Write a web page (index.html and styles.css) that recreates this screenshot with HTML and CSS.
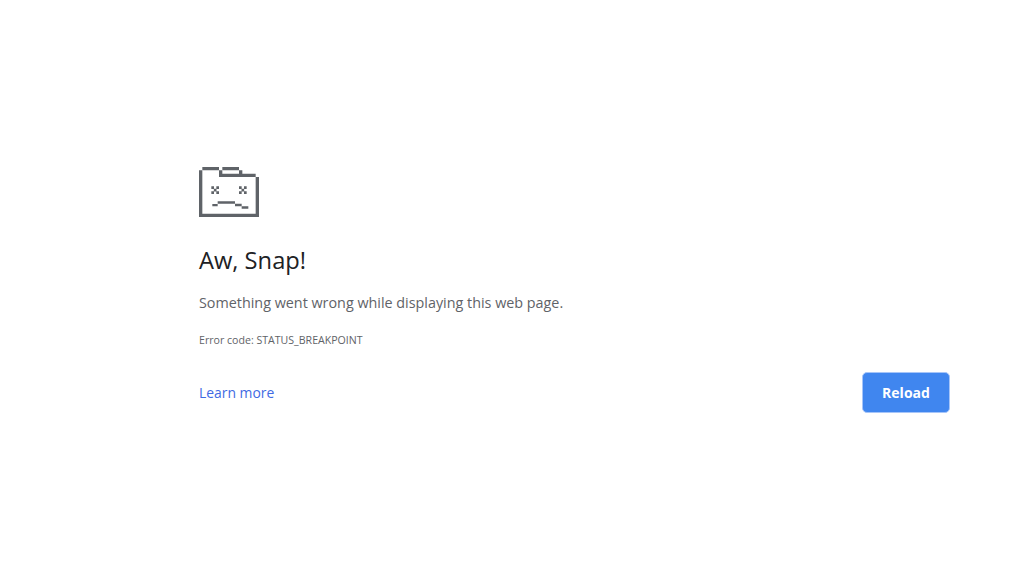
FILE: index.html
```html
<!DOCTYPE html>
<html lang="en">
<head>
    <meta charset="UTF-8">
    <meta name="viewport" content="width=device-width, initial-scale=1.0">
    <title>Aw, Snap!</title>
    <link rel="stylesheet" href="styles.css">
</head>
<body>
    <div class="error-page">
        <svg class="sad-tab" viewBox="0 0 18 15" aria-hidden="true">
            <path d="M0 1h1v13h16V3h-11V1h1v1h5V1h1v1h4v1h1v12H0z"/>
            <path d="M1 0h5v1H1zM7 0h5v1H7z"/>
            <path d="M3.7 5.8h.8v.8h-.8zM5.2 5.8H6v.8h-.8zM4.45 6.55h.8v.8h-.8zM3.7 7.3h.8v.8h-.8zM5.2 7.3H6v.8h-.8z"/>
            <path d="M12 5.8h.8v.8H12zM13.5 5.8h.8v.8h-.8zM12.75 6.55h.8v.8h-.8zM12 7.3h.8v.8H12zM13.5 7.3h.8v.8h-.8z"/>
            <path d="M4 11.1h1.6v.7H4zM5.6 10.3h5.2v.7H5.6zM10.8 11h2v.8h-2zM12.8 11.8h2v.7h-2z"/>
        </svg>
        <h1 class="title">Aw, Snap!</h1>
        <p class="message">Something went wrong while displaying this web page.</p>
        <p class="error-code">Error code: STATUS_BREAKPOINT</p>
        <div class="actions">
            <a class="learn-more" href="#">Learn more</a>
            <button class="reload-btn">Reload</button>
        </div>
    </div>
</body>
</html>
```

FILE: styles.css
```css
body {
    margin: 0;
    background-color: white;
    font-family: "Open Sans", "Noto Sans", Arial, sans-serif;
}
.error-page {
    width: 751px;
    margin-left: 199px;
    padding-top: 167px;
}
.sad-tab {
    display: block;
    width: 60px;
    height: 50px;
    fill: #5f6368;
}
.title {
    margin: 26px 0 0;
    font-size: 23.7px;
    font-weight: 400;
    line-height: 34px;
    color: #202124;
}
.message {
    margin: 16px 0 0;
    font-size: 14.35px;
    line-height: 20px;
    color: #5f6368;
}
.error-code {
    margin: 20px 0 0;
    font-size: 10.6px;
    line-height: 14px;
    color: #5f6368;
}
.actions {
    display: flex;
    justify-content: space-between;
    align-items: center;
    margin-top: 25px;
}
.learn-more {
    font-size: 13.9px;
    color: #3f6ae3;
    text-decoration: none;
}
.reload-btn {
    width: 88px;
    height: 41px;
    padding: 0;
    border: 1px solid #a6c5f9;
    border-radius: 5px;
    background-color: #4086ef;
    color: white;
    font-family: inherit;
    font-size: 14px;
    font-weight: 700;
}
```
